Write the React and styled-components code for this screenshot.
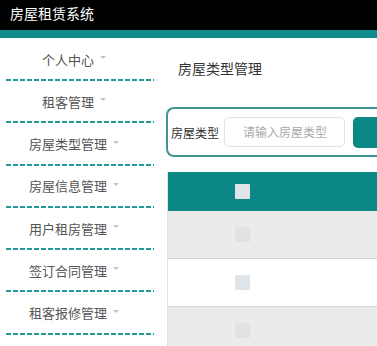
import React from 'react'
import styled, { createGlobalStyle } from 'styled-components'

const teal = '#0b8886'

const GlobalStyle = createGlobalStyle`
  html, body {
    margin: 0;
    padding: 0;
    background: #fff;
    overflow: hidden;
    font-family: "Noto Sans CJK SC", "Noto Sans", sans-serif;
  }
`

const Page = styled.div`
  width: 377px;
  height: 346px;
  overflow: hidden;
`

const TopBar = styled.header`
  height: 30px;
  background: #000;
  color: #fff;
  font-size: 14px;
  line-height: 27px;
  padding-left: 10px;
  border-bottom: 8px solid #108b8b;
`

const Body = styled.div`
  display: grid;
  grid-template-columns: 160px 1fr;
`

const Sidebar = styled.nav`
  display: flex;
  flex-direction: column;
  padding-top: 1px;
`

const MenuItem = styled.div`
  position: relative;
  height: 40px;
  margin-bottom: 2.3px;
  display: flex;
  align-items: center;
  justify-content: center;
  padding-right: 12px;
  gap: 6px;
  color: #555;
  font-size: 13px;

  &::after {
    content: '';
    position: absolute;
    left: 6px;
    width: 148px;
    bottom: -2px;
    height: 2px;
    background: repeating-linear-gradient(to right, #1f9a96 0 5px, transparent 5px 7px);
  }
`

const Caret = styled.span`
  width: 0;
  height: 0;
  border-left: 3px solid transparent;
  border-right: 3px solid transparent;
  border-top: 3px solid #c4c4c4;
  margin-top: -3px;
`

const Main = styled.main`
  padding-left: 6px;
`

const Title = styled.h2`
  margin: 0;
  height: 69px;
  padding: 20px 0 0 12px;
  box-sizing: border-box;
  font-size: 14px;
  font-weight: normal;
  color: #333;
`

const SearchCard = styled.div`
  display: flex;
  align-items: center;
  height: 50px;
  box-sizing: border-box;
  border: 2px solid #3f9793;
  border-right: none;
  border-radius: 8px 0 0 8px;
  padding-left: 3px;
`

const Label = styled.label`
  font-size: 12px;
  color: #333;
  width: 53px;
`

const Input = styled.div`
  width: 121px;
  height: 30px;
  box-sizing: border-box;
  border: 1px solid #e2e2e2;
  border-radius: 5px;
  font-size: 12px;
  color: #aaa;
  line-height: 28px;
  padding-left: 18px;
  margin-right: 8px;
`

const Button = styled.div`
  flex: 1;
  height: 31px;
  background: ${teal};
  border-radius: 5px 0 0 5px;
`

const Table = styled.div`
  margin-top: 15px;
  margin-left: 1px;
  border-left: 1px solid #e2e2e2;
`

const Row = styled.div`
  height: ${p => (p.head ? 38 : 47)}px;
  background: ${p => (p.head ? teal : p.stripe ? '#ebebeb' : '#fff')};
  border-bottom: 1px solid ${p => (p.head ? teal : '#d4d4d4')};
  display: flex;
  align-items: center;
  padding-left: 67px;
`

const Check = styled.span`
  width: 15px;
  height: 15px;
  border-radius: 1px;
  background: ${p => (p.dim ? '#e2e2e2' : '#dfe4e9')};
`

const menus = ['个人中心', '租客管理', '房屋类型管理', '房屋信息管理', '用户租房管理', '签订合同管理', '租客报修管理']

export default function App () {
  return (
    <Page>
      <GlobalStyle />
      <TopBar>房屋租赁系统</TopBar>
      <Body>
        <Sidebar>
          {menus.map(m => (
            <MenuItem key={m}>{m}<Caret /></MenuItem>
          ))}
        </Sidebar>
        <Main>
          <Title>房屋类型管理</Title>
          <SearchCard>
            <Label>房屋类型</Label>
            <Input>请输入房屋类型</Input>
            <Button />
          </SearchCard>
          <Table>
            <Row head><Check /></Row>
            <Row stripe><Check dim /></Row>
            <Row><Check /></Row>
            <Row stripe><Check dim /></Row>
          </Table>
        </Main>
      </Body>
    </Page>
  )
}
